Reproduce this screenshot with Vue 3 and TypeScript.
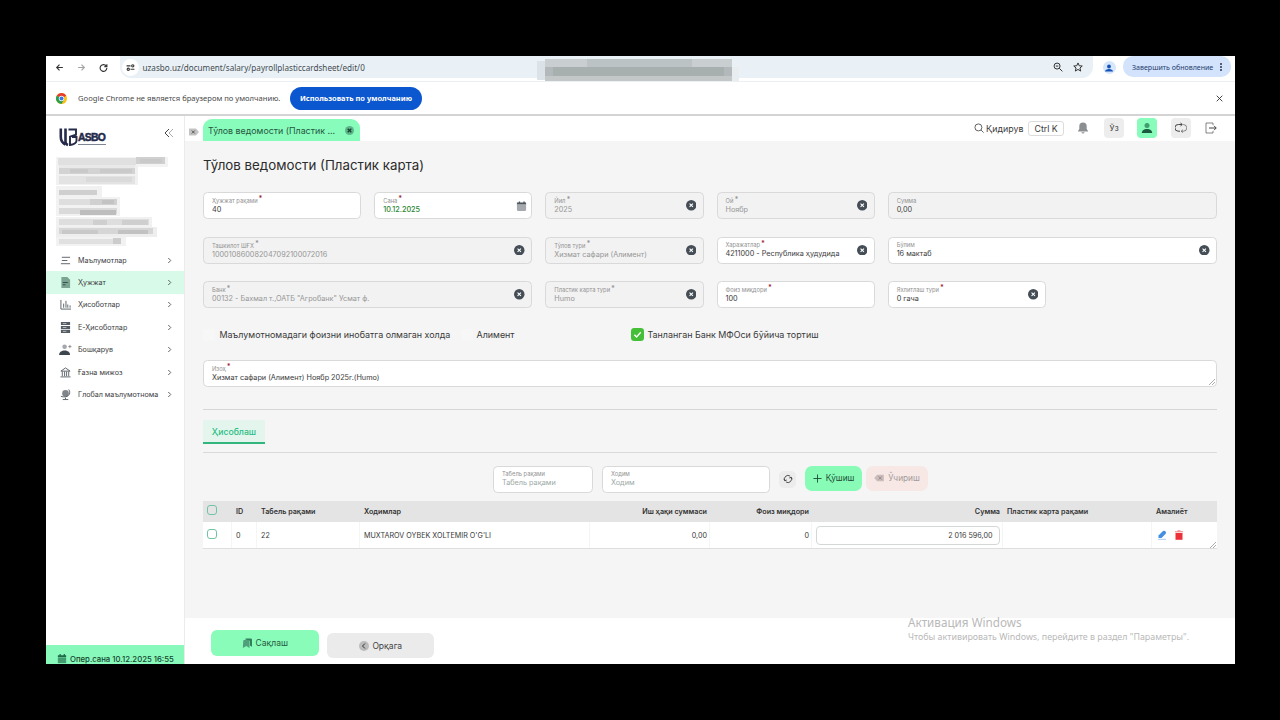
<script setup lang="ts">
import { ref } from 'vue'

interface Field {
  label: string
  value: string
  span?: number
  required?: boolean
  disabled?: boolean
  clear?: boolean
  date?: boolean
  dark?: boolean
}

const menu = [
  { title: 'Маълумотлар', icon: 'lines' },
  { title: 'Ҳужжат', icon: 'doc' },
  { title: 'Ҳисоботлар', icon: 'chart' },
  { title: 'Е-Ҳисоботлар', icon: 'server' },
  { title: 'Бошқарув', icon: 'users' },
  { title: 'Ғазна мижоз', icon: 'bank' },
  { title: 'Глобал маълумотнома', icon: 'globe' },
]
const activeMenu = ref('doc')

const fields = ref<Field[]>([
  { label: 'Ҳужжат рақами', value: '40', required: true },
  { label: 'Сана', value: '10.12.2025', required: true, date: true },
  { label: 'Йил', value: '2025', required: true, disabled: true, clear: true },
  { label: 'Ой', value: 'Ноябр', required: true, disabled: true, clear: true },
  { label: 'Сумма', value: '0,00', span: 2, disabled: true, dark: true },
  { label: 'Ташкилот ШҒХ', value: '100010860082047092100072016', span: 2, required: true, disabled: true, clear: true },
  { label: 'Тўлов тури', value: 'Хизмат сафари (Алимент)', required: true, disabled: true, clear: true },
  { label: 'Харажатлар', value: '4211000 - Республика ҳудудида', required: true, clear: true },
  { label: 'Бўлим', value: '16 мактаб', span: 2, clear: true },
  { label: 'Банк', value: '00132 - Бахмал т.,ОАТБ "Агробанк" Усмат ф.', span: 2, required: true, disabled: true, clear: true },
  { label: 'Пластик карта тури', value: 'Humo', required: true, disabled: true, clear: true },
  { label: 'Фоиз миқдори', value: '100', required: true },
  { label: 'Яхлитлаш тури', value: '0 гача', required: true, clear: true },
])

const rows = ref([
  { id: 0, tabel: '22', name: "MUXTAROV OYBEK XOLTEMIR O'G'LI", salary: '0,00', percent: 0, sum: '2 016 596,00', card: '' },
])

// masked blocks: x, y, width, height, color
const orgMask = [
  [0, 0, 112, 10, '#f3f3f3'], [2, 1, 78, 7, '#e0e0e0'], [80, 0, 29, 7, '#d0d0d0'], [84, 2, 22, 4, '#c9c9c9'],
  [0, 8, 82, 20, '#f1f1f1'], [3, 8, 76, 3, '#e9e9e9'], [3, 11, 76, 6, '#d3d3d3'], [14, 12, 18, 4, '#c9c9c9'], [44, 12, 32, 4, '#cacaca'],
  [3, 19, 76, 8, '#e3e3e3'], [30, 20, 46, 5, '#dadada'],
  [0, 29, 46, 11, '#f1f1f1'], [3, 33, 38, 5, '#cfcfcf'],
  [0, 40, 64, 19, '#f2f2f2'], [3, 42, 56, 6, '#dedede'], [34, 42, 27, 6, '#d0d0d0'], [46, 43, 12, 4, '#c3c3c3'],
  [3, 51, 58, 6, '#dadada'], [24, 53, 36, 5, '#bdbdbd'], [0, 60, 96, 10, '#f1f1f1'],
  [3, 62, 90, 6, '#dedede'], [37, 63, 14, 5, '#cfcfcf'], [66, 63, 26, 5, '#cfcfcf'], [0, 70, 101, 10, '#eeeeee'],
  [3, 71, 94, 6, '#d6d6d6'], [6, 73, 36, 4, '#c9c9c9'], [62, 73, 30, 4, '#c2c2c2'],
  [0, 80, 70, 9, '#f2f2f2'], [3, 82, 62, 5, '#e0e0e0'], [57, 81, 8, 6, '#cccccc'],
]
const barMask = [
  [0, 3, 8, 19, '#dbe3e8'], [8, 1, 187, 22, '#c9cfd1'], [50, 1, 105, 8, '#bcc3c5'],
  [8, 9, 187, 9, '#b3b9ba'], [16, 9, 171, 9, '#a8afaf'], [8, 18, 187, 5, '#c3c7c7'], [195, 9, 7, 14, '#e8edf0'],
]
</script>

<template>
  <div class="screen">
    <div class="window">
      <div class="urlbar">
        <div class="nav">
          <svg viewBox="0 0 16 16"><path d="M14 8H3M8 3 3 8l5 5" /></svg>
          <svg viewBox="0 0 16 16" class="faded"><path d="M2 8h11M8 3l5 5-5 5" /></svg>
          <svg viewBox="0 0 16 16"><path d="M13 5.500A6 6 0 1 0 14 9M14 2v4.500H9.500" /></svg>
        </div>
        <div class="address">
          <span class="site"><svg viewBox="0 0 16 16"><path d="M1 5h7M8 11h7" /><circle cx="12" cy="5" r="2" /><circle cx="4" cy="11" r="2" /></svg></span>
          <span class="url">uzasbo.uz/document/salary/payrollplasticcardsheet/edit/0</span>
          <svg viewBox="0 0 16 16" class="addr-icon"><circle cx="6.500" cy="6.500" r="4.800" /><path d="m10 10 5 5M4.500 6.500h4" /></svg>
          <svg viewBox="0 0 16 16" class="addr-icon"><path d="m8 1.500 2 4.500 4.800.4-3.700 3.200 1.200 4.900L8 11.900l-4.300 2.600 1.200-4.900L1.200 6.400 6 6z" /></svg>
        </div>
        <span class="avatar"><svg viewBox="0 0 16 16"><circle cx="8" cy="5" r="3.800" /><path d="M0 15c0-7 16-7 16 0z" /></svg></span>
        <div class="update"><span>Завершить обновление</span><i></i></div>
        <svg class="bar-mask" viewBox="0 0 204 24"><rect v-for="(r, i) in barMask" :key="i" :x="r[0]" :y="r[1]" :width="r[2]" :height="r[3]" :fill="String(r[4])" /></svg>
      </div>

      <div class="infobar">
        <svg viewBox="0 0 24 24" class="chrome">
          <circle cx="12" cy="12" r="12" fill="#fbc116" />
          <path d="M12 12 1.600 6A12 12 0 0 1 22.400 6z" fill="#e33b2e" />
          <path d="M12 12 1.600 6A12 12 0 0 0 12 24l5-9z" fill="#269f50" />
          <circle cx="12" cy="12" r="5.800" fill="#fff" /><circle cx="12" cy="12" r="4.400" fill="#3b78e7" />
        </svg>
        <span class="info-text">Google Chrome не является браузером по умолчанию.</span>
        <button class="default-btn">Использовать по умолчанию</button>
        <svg viewBox="0 0 10 10" class="info-close"><path d="m1 1 8 8M9 1 1 9" /></svg>
      </div>

      <div class="app">
        <aside class="sidebar">
          <div class="brand">
            <div class="logo">
              <svg viewBox="0 0 20 20">
                <path d="M1.800 1.500V10q0 5 4.500 7.500M6.500 1.500V15q0 2 2.500 3" stroke-width="2.600" />
                <path d="M9.500 2.500H17v5.200l-6 2V18q6.500-1 6.500-4.500V10H13" stroke-width="1.900" />
              </svg>
              <span>ASBO</span>
            </div>
            <svg viewBox="0 0 10 10" class="collapse"><path d="M5 1 1 5l4 4" /><path d="M9 1 5 5l4 4" opacity=".45" /></svg>
          </div>
          <svg class="org-mask" viewBox="0 0 112 90"><rect v-for="(r, i) in orgMask" :key="i" :x="r[0]" :y="r[1]" :width="r[2]" :height="r[3]" :fill="String(r[4])" /></svg>
          <nav class="menu">
            <div v-for="m in menu" :key="m.icon" :class="['menu-item', m.icon, { active: m.icon === activeMenu }]" @click="activeMenu = m.icon">
              <svg viewBox="0 0 12 12" class="menu-icon">
                <template v-if="m.icon === 'lines'"><path d="M2 2.500h9M1 9.500h10" class="s" /><path d="M2 6h6" class="s" /></template>
                <template v-else-if="m.icon === 'doc'"><path d="M1.500 0H8l3 3v9H1.500z" fill="#7ba493" /><path d="M3 6h5.500M3 8.500h3" stroke="#2d4c42" /></template>
                <template v-else-if="m.icon === 'chart'"><path d="M1 1v10h11M4 9.500V5M6.500 9.500V2M8.500 9.500V6M11 9.500V7" class="s" /></template>
                <template v-else-if="m.icon === 'server'"><path d="M1 0h10v3.300H1zM1 4.300h10v3.200H1zM1 8.500h10V12H1z" fill="#545b62" /><path d="M3 1.700h4M3 6h4M3 10.200h4" stroke="#d5d9db" stroke-width=".8" /></template>
                <template v-else-if="m.icon === 'users'"><circle cx="5" cy="3" r="2.500" fill="#a4a8ab" /><path d="M-1 12c0-6.500 12-6.500 12 0z" fill="#3e464d" /><path d="M10.800 1v3.500M9 2.800h3.500" stroke="#777" stroke-width=".8" /></template>
                <template v-else-if="m.icon === 'bank'"><path d="M1 4.500 6 1l5 3.500zM2.500 5v5M5 5v5M7.200 5v5M9.500 5v5M.5 10.800h11" class="s" /></template>
                <template v-else><circle cx="6" cy="4.800" r="3.600" fill="#7f858a" /><path d="M9.500.5c3.500 5-1.500 10-8.500 7.500M6 9.500V11M3 11.500h6" class="s" /></template>
              </svg>
              <span class="menu-title">{{ m.title }}</span>
              <svg viewBox="0 0 6 8" class="chev"><path d="m1.500 1 3 3-3 3" /></svg>
            </div>
          </nav>
          <div class="oper">
            <svg viewBox="0 0 12 12" class="cal"><path d="M1 4h10v7H1z" opacity=".65" /><path d="M1 1.500h10v2H1zM3 0h1.500v3H3zM8 0h1.500v3H8z" /></svg>
            <span>Опер.сана 10.12.2025 16:55</span>
          </div>
        </aside>

        <div class="content">
          <header class="topbar">
            <svg viewBox="0 0 10 8" class="tag"><path d="M0 .5h7L10 4 7 7.500H0z" fill="#c4c4c4" /><path d="m2.800 2.500 3 3m0-3-3 3" stroke="#555" /></svg>
            <div class="page-tab"><span>Тўлов ведомости (Пластик ...</span><svg viewBox="0 0 10 10"><circle cx="5" cy="5" r="5" fill="#5cb589" /><path d="m3 3 4 4m0-4-4 4" stroke="#143f2c" stroke-width="1.400" /></svg></div>
            <div class="tools">
              <svg viewBox="0 0 12 12" class="search"><circle cx="5.300" cy="5.300" r="4.200" /><path d="m8.500 8.500 3 3" /></svg>
              <span class="search-text">Қидирув</span>
              <span class="kbd">Ctrl K</span>
              <svg viewBox="0 0 12 12" class="bell"><path d="M6 .5a3.700 3.700 0 0 0-3.700 3.700V7L1 9v.6h10V9L9.700 7V4.200A3.700 3.700 0 0 0 6 .5zM4.300 10.300h3.400a1.800 1.800 0 0 1-3.400 0z" /></svg>
              <span class="tool lang">Ўз</span>
              <span class="tool user"><svg viewBox="0 0 12 12"><circle cx="6" cy="3.500" r="2.500" fill="#3f9d6e" /><path d="M.8 11c0-5.500 10.400-5.500 10.400 0z" fill="#1b5b3d" /></svg></span>
              <span class="tool"><svg viewBox="0 0 12 12" class="loop"><path d="M7 2.500H3.500a3.300 3.300 0 0 0-.5 6.700H5M5.500 1l1.800 1.500L5.500 4" /><path d="M8 2.600h.5a3.300 3.300 0 0 1 0 6.600H6.500M8 7.700 6.200 9.200 8 10.700" opacity=".6" /></svg></span>
              <svg viewBox="0 0 12 12" class="exit"><path d="M8 3V1H1v10h7V9" opacity=".65" /><path d="M4 6h7.200M9 3.800 11.200 6 9 8.200" /></svg>
            </div>
          </header>

          <main class="main">
            <h1>Тўлов ведомости (Пластик карта)</h1>
            <div class="form">
              <div v-for="f in fields" :key="f.label" :class="['field', { disabled: f.disabled, wide: f.span === 2, date: f.date, dark: f.dark }]">
                <div class="field-text">
                  <label>{{ f.label }}<b v-if="f.required">*</b></label>
                  <span class="value">{{ f.value }}</span>
                </div>
                <svg v-if="f.clear" viewBox="0 0 10 10" class="clear"><circle cx="5" cy="5" r="5" /><path d="m3.400 3.400 3.200 3.200m0-3.200L3.400 6.600" /></svg>
                <svg v-if="f.date" viewBox="0 0 12 12" class="cal"><path d="M1 4h10v5.500q0 1.500-1.500 1.500h-7Q1 11 1 9.500z" opacity=".5" /><path d="M1 1.500h10v2.300H1zM3 .5h1.500V3H3zM8 .5h1.500V3H8z" /></svg>
              </div>
            </div>

            <div class="checks">
              <i class="ghost"></i><span class="check-a">Маълумотномадаги фоизни инобатга олмаган холда</span>
              <i class="ghost second"></i><span class="check-b">Алимент</span>
              <svg viewBox="0 0 14 14" class="checked"><rect width="14" height="14" rx="3.500" /><path d="m3.700 7.200 2.300 2.400 4.500-5" /></svg>
              <span class="check-c">Танланган Банк МФОси бўйича тортиш</span>
            </div>

            <div class="field note">
              <div class="field-text"><label>Изоҳ<b>*</b></label><span class="value">Хизмат сафари (Алимент) Ноябр 2025г.(Humo)</span></div>
              <svg viewBox="0 0 6 6" class="grip"><path d="M0 6 6 0M3 6l3-3" /></svg>
            </div>

            <div class="tabs"><span class="tab">Ҳисоблаш</span></div>

            <div class="filters">
              <div class="field filter-tabel"><div class="field-text"><label>Табель рақами</label><span class="value">Табель рақами</span></div></div>
              <div class="field filter-name"><div class="field-text"><label>Ходим</label><span class="value">Ходим</span></div></div>
              <button class="refresh"><svg viewBox="0 0 12 12"><path d="M2.200 8A4.300 4.300 0 0 1 8.500 2.500M9.800 4A4.300 4.300 0 0 1 3.500 9.500M1 5.800l1.200 2.400 2.300-1M11 6.200 9.800 3.800l-2.300 1" /></svg></button>
              <button class="add"><svg viewBox="0 0 10 10"><path d="M5 .5v9M.5 5h9" /></svg><span>Қўшиш</span></button>
              <button class="del"><svg viewBox="0 0 12 10"><path d="M0 5 3.500 1H12v8H3.500z" fill="#c9bcbb" /><path d="m5.500 3 4 4m0-4-4 4" stroke="#958787" stroke-width="1.200" /></svg><span>Ўчириш</span></button>
            </div>

            <div class="table">
              <div class="tr th">
                <span class="sel"><i class="box"></i></span><span>ID</span><span>Табель рақами</span><span>Ходимлар</span>
                <span class="r">Иш ҳақи суммаси</span><span class="r">Фоиз миқдори</span><span class="r">Сумма</span><span>Пластик карта рақами</span><span>Амалиёт</span>
              </div>
              <div v-for="r in rows" :key="r.id" class="tr td">
                <span class="sel"><i class="box"></i></span><span>{{ r.id }}</span><span>{{ r.tabel }}</span><span class="person">{{ r.name }}</span>
                <span class="r">{{ r.salary }}</span><span class="r">{{ r.percent }}</span>
                <span class="sum-cell"><span class="sum">{{ r.sum }}</span></span><span>{{ r.card }}</span>
                <span class="actions">
                  <svg viewBox="0 0 10 10"><path d="M1.500 8V5.500L6 1q1-.7 2 0l.7.7q.7 1 0 2L4.500 8z" fill="#438fe0" /><path d="M1 9.300h8" stroke="#a8cbef" /></svg>
                  <svg viewBox="0 0 10 10"><path d="M1.500 3h7v6.800h-7z" fill="#ec3038" /><path d="M1 1.800h8M3.500.8h3" stroke="#f27c80" /></svg>
                </span>
              </div>
              <svg viewBox="0 0 6 6" class="grip"><path d="M0 6 6 0M3 6l3-3" /></svg>
            </div>
          </main>

          <footer class="footer">
            <button class="save"><svg viewBox="0 0 12 12"><path d="M3.500 1.500Q4 .5 5 .5h5.500Q12 .5 12 2v8.500l-2.500-1.500V3.500z" fill="#327d5b" /><path d="M1.500 3.500q0-1 1-1H8q1 0 1 1V12l-3.800-2.300L1 12z" fill="#4f9f7a" /></svg><span>Сақлаш</span></button>
            <button class="back"><svg viewBox="0 0 10 10"><circle cx="5" cy="5" r="5" fill="#bcbcbc" /><path d="M6 2.500 3.500 5 6 7.500" stroke="#333" fill="none" /></svg><span>Орқага</span></button>
          </footer>
        </div>
      </div>

      <div class="watermark"><div class="wm-title">Активация Windows</div><div class="wm-text">Чтобы активировать Windows, перейдите в раздел "Параметры".</div></div>
    </div>
  </div>
</template>

<style>
body { background: #000; }
</style>

<style scoped>
* { box-sizing: border-box; }
button { border: 0; padding: 0; font: inherit; }
svg { display: block; flex: none; }
.screen { width: 1280px; height: 720px; padding: 56px 45px 56px 46px; background: #000; font-family: Inter, "Noto Sans", sans-serif; color: #3a3a3a; }
.window { position: relative; width: 1189px; height: 608px; background: #fff; overflow: hidden; white-space: nowrap; }

.urlbar { position: relative; display: flex; align-items: flex-start; height: 26px; border-bottom: 1px solid #edf0f2; }
.nav { display: flex; gap: 13px; padding: 7px 0 0 9px; width: 74px; }
.nav svg { width: 9px; height: 9px; fill: none; stroke: #333; stroke-width: 2; }
.nav .faded { opacity: .45; }
.address { display: flex; align-items: center; width: 973px; height: 22px; border-radius: 0 0 11px 11px; background: #e9f1f7; padding-right: 10px; }
.site { display: flex; align-items: center; justify-content: center; width: 17px; height: 17px; margin-left: 2px; border-radius: 50%; background: #fff; }
.site svg { width: 9px; height: 9px; fill: none; stroke: #333; stroke-width: 2; }
.url { flex: 1; margin-left: 3.500px; font: 8.15px "Noto Sans", sans-serif; color: #454b50; }
.addr-icon { width: 10px; height: 10px; margin-left: 10px; fill: none; stroke: #333; stroke-width: 1.6; }
.avatar { display: flex; align-items: center; justify-content: center; width: 13px; height: 13px; margin: 5px 0 0 9.500px; border-radius: 50%; background: #d6e6fb; }
.avatar svg { width: 8px; height: 8px; fill: #1452b5; }
.update { display: flex; align-items: center; width: 108px; height: 21px; margin-left: 7.500px; padding-left: 9px; border-radius: 10px; background: #d3e3fc; font: 7.05px "Noto Sans", sans-serif; color: #26406f; }
.update span { width: 81px; }
.update i { width: 2px; height: 2px; margin-left: 7px; border-radius: 50%; background: #26334f; box-shadow: 0 -3px #26334f, 0 3px #26334f; }
.bar-mask { position: absolute; left: 491px; top: 2px; width: 204px; height: 24px; }

.infobar { display: flex; align-items: center; height: 34px; padding: 0 12px 0 10px; border-bottom: 2px solid #d4d4d4; }
.chrome { width: 11px; height: 11px; }
.info-text { margin-left: 11px; width: 202px; font: 7.62px "Noto Sans", sans-serif; color: #4a4a4a; }
.default-btn { width: 132px; height: 23px; margin-left: 10px; border-radius: 12px; background: #0b57d0; color: #fff; font: bold 7.45px "Noto Sans", sans-serif; }
.info-close { width: 7px; height: 7px; margin-left: auto; stroke: #333; stroke-width: 1.3; }

.app { display: flex; height: 548px; }
.sidebar { display: flex; flex-direction: column; width: 139px; background: #fff; border-right: 1px solid #ebebeb; }
.brand { display: flex; height: 41px; padding: 11px 10px 0 13px; justify-content: space-between; }
.logo { display: flex; align-items: flex-end; height: 20px; }
.logo svg { width: 20px; height: 20px; fill: none; stroke: #252b49; }
.logo span { height: 14px; margin: 0 0 2px -1px; padding-right: 1px; border-bottom: 1px solid #7d8494; font: bold 10.4px/14px "Liberation Sans", sans-serif; letter-spacing: -.7px; color: #252b49; -webkit-text-stroke: .5px #252b49; }
.collapse { width: 10px; height: 10px; margin-top: 1px; fill: none; stroke: #444; stroke-width: 1; }
.org-mask { width: 112px; height: 90px; margin-left: 10px; }
.menu { margin-top: 2px; }
.menu-item { display: flex; align-items: center; height: 22.4px; padding: 0 12px 0 14px; font-size: 7.15px; color: #3c4043; }
.menu-item.active { background: #d8fbe9; }
.menu-icon { width: 11px; height: 11px; margin-right: 7px; overflow: visible; }
.menu-icon .s { fill: none; stroke: #555c61; stroke-width: 1; }
.menu-title { flex: 1; }
.chev { width: 5px; height: 7px; fill: none; stroke: #444; stroke-width: 1; }
.oper { display: flex; align-items: center; gap: 3px; height: 19px; margin-top: auto; padding: 9px 0 0 11px; background: #88f9bb; font-size: 7.75px; font-weight: 500; color: #14432d; }
.cal { width: 11px; height: 11px; fill: #4c545d; }
.date .cal { margin: 2px -2px 0 0; }
.oper .cal { width: 10px; height: 10px; fill: #1d6a48; }

.content { flex: 1; display: flex; flex-direction: column; min-width: 0; }
.topbar { display: flex; height: 25px; padding-left: 4px; background: #fff; }
.tag { width: 10px; height: 8px; margin-top: 12px; }
.page-tab { display: flex; align-items: center; justify-content: space-between; width: 157px; height: 22px; margin: 3px 0 0 4px; padding: 1px 6px 0 5px; border-radius: 9px 9px 0 0; background: #88fcbb; font-size: 8.85px; color: #26563f; }
.page-tab svg { width: 9px; height: 9px; fill: none; }
.tools { display: flex; align-items: center; height: 24px; margin-left: auto; padding-right: 18px; }
.search { width: 10px; height: 10px; fill: none; stroke: #444; stroke-width: 1; }
.search-text { width: 38px; margin-left: 2px; font-size: 8.8px; }
.kbd { width: 36px; height: 15px; margin-left: 4px; border: 1px solid #dcdcdc; border-radius: 3px; font-size: 8.8px; line-height: 13px; text-align: center; }
.bell { width: 12px; height: 12px; margin: 0 15px 0 13px; fill: #8c8f91; }
.tool { display: flex; align-items: center; justify-content: center; width: 20px; height: 20px; margin-right: 13.3px; border-radius: 4px; background: #ededed; font-size: 8px; }
.tool.user { background: #88fcbb; }
.tool svg { width: 12px; height: 12px; }
.loop, .exit { width: 12px; height: 12px; fill: none; stroke: #444; stroke-width: 1; }
.tools .exit { margin-left: 1px; }

.main { flex: 1; padding: 0 18px 0 18px; background: #f5f5f5; }
h1 { margin: 0; padding-top: 15px; height: 51px; font-size: 13.32px; font-weight: 400; line-height: 18px; color: #2c2c2c; }
.form { display: grid; grid-template-columns: repeat(6, 1fr); gap: 17.6px 13px; }
.field { position: relative; display: flex; align-items: center; justify-content: space-between; height: 27px; padding: 0 6.500px 0 8px; border: 1px solid #d9d9d9; border-radius: 4.5px; background: #fff; }
.field.wide { grid-column: span 2; }
.field.disabled { background: #f2f2f2; }
.field-text { display: flex; flex-direction: column; min-width: 0; margin-top: -1px; }
.field label { height: 9px; font-size: 5.8px; line-height: 9px; color: #929292; }
.field label b { margin-left: 1px; font-size: 7px; font-weight: 700; line-height: 5px; vertical-align: 1.500px; color: #a02c40; }
.field .value { height: 10px; font-size: 7.28px; line-height: 10px; color: #3a3a3a; }
.disabled .value, .disabled label b { color: #969696; }
.disabled .field-text { margin-top: 0; }
.field.dark .field-text { margin-top: -1px; }
.field.dark .value { color: #444; }
.date .value { color: #26852f; font-weight: 500; }
.clear { width: 10.5px; height: 10.5px; fill: #454e56; }
.clear path { stroke: #fff; stroke-width: 1; }
.checks { display: flex; align-items: center; height: 14px; margin-top: 19.5px; font-size: 8.92px; }
.ghost { width: 12px; height: 12px; border-radius: 3px; background: #f7f7f7; }
.check-a { margin-left: 4.500px; width: 231px; }
.ghost.second { margin-left: 10px; }
.check-b { width: 154px; margin-left: 4px; }
.checked { width: 13px; height: 13px; fill: #45bf37; }
.checked path { fill: none; stroke: #fff; stroke-width: 1.5; }
.check-c { margin-left: 4px; }
.note { margin-top: 18.7px; }
.grip { position: absolute; right: 1px; bottom: 1px; width: 6px; height: 6px; stroke: #888; stroke-width: .7; }
.tabs { display: flex; align-items: flex-end; height: 44px; margin-top: 22px; padding-bottom: 8px; border-top: 1px solid #d6d6d6; border-bottom: 1px solid #d9d9d9; }
.tab { width: 62px; height: 24px; border-bottom: 2px solid #33b67d; background: #e4f5ee; font-size: 8.7px; font-weight: 500; line-height: 24px; text-align: center; color: #29bd84; }
.filters { display: flex; align-items: center; height: 28px; margin-top: 12px; padding-left: 290px; }
.filter-tabel { width: 100px; margin-right: 9px; }
.filter-name { width: 168px; }
.filters .value { color: #9aa9a5; }
.refresh { display: flex; align-items: center; justify-content: center; width: 17px; height: 17px; margin-left: 9px; border-radius: 5px; background: #ececec; }
.refresh svg { width: 10px; height: 10px; fill: none; stroke: #333; stroke-width: 1; }
.add, .del { display: flex; align-items: center; justify-content: center; height: 25px; gap: 4px; margin-bottom: 2px; border-radius: 7px; font-size: 8.3px; }
.add { width: 57px; margin-left: 9px; background: #88fcb6; color: #1d4c37; }
.add svg { width: 9px; height: 9px; stroke: #1d4c37; }
.del { width: 62px; margin-left: 4px; background: #f7e8e6; color: #a29a9a; }
.del svg { width: 10px; height: 8px; }
.table { position: relative; margin-top: 7.3px; }
.tr { display: grid; grid-template-columns: 29px 25px 103px 230px 120px 102px 191px 149px 65px; align-items: center; font-size: 7.2px; }
.tr > span { display: flex; align-items: center; height: 100%; padding: 0 3px 0 4px; }
.th { height: 21px; background: #e4e4e4; font-weight: 600; color: #333; }
.td { height: 27px; background: #fff; border-bottom: 1px solid #dcdfdd; }
.td > span { padding-top: 1px; box-shadow: inset -1px 0 #f4f6f5; }
.td > span:last-child { box-shadow: none; }
.tr > .r { justify-content: flex-end; }
.box { width: 10px; height: 10px; margin-top: -3px; border: 1px solid #6fc5a3; border-radius: 3px; }
.tr > .sum-cell { padding: 1px 3.500px 0; }
.sum { width: 100%; height: 19px; padding-right: 6px; border: 1px solid #d3d8d6; border-radius: 4px; line-height: 17px; text-align: right; }
.tr > .actions { gap: 7px; padding-left: 5px; }
.actions svg { width: 10px; height: 10px; }
.footer { display: flex; height: 46px; padding: 12px 0 0 26px; background: #fff; }
.footer button { display: flex; align-items: center; justify-content: center; gap: 3.5px; width: 108px; height: 26px; border-radius: 6px; font-size: 8.5px; color: #444; }
.footer svg { width: 10px; height: 10px; }
.footer .save { background: #88fcb8; color: #265b43; }
.footer .back { margin: 3px 0 0 8px; width: 107px; height: 25px; background: #ebebeb; }
.watermark { position: absolute; left: 862px; top: 559px; font-family: "Noto Sans", sans-serif; color: #b9b9b9; }
.wm-title { font-size: 11.7px; line-height: 15px; }
.wm-text { font-size: 8.9px; line-height: 14px; }
</style>
